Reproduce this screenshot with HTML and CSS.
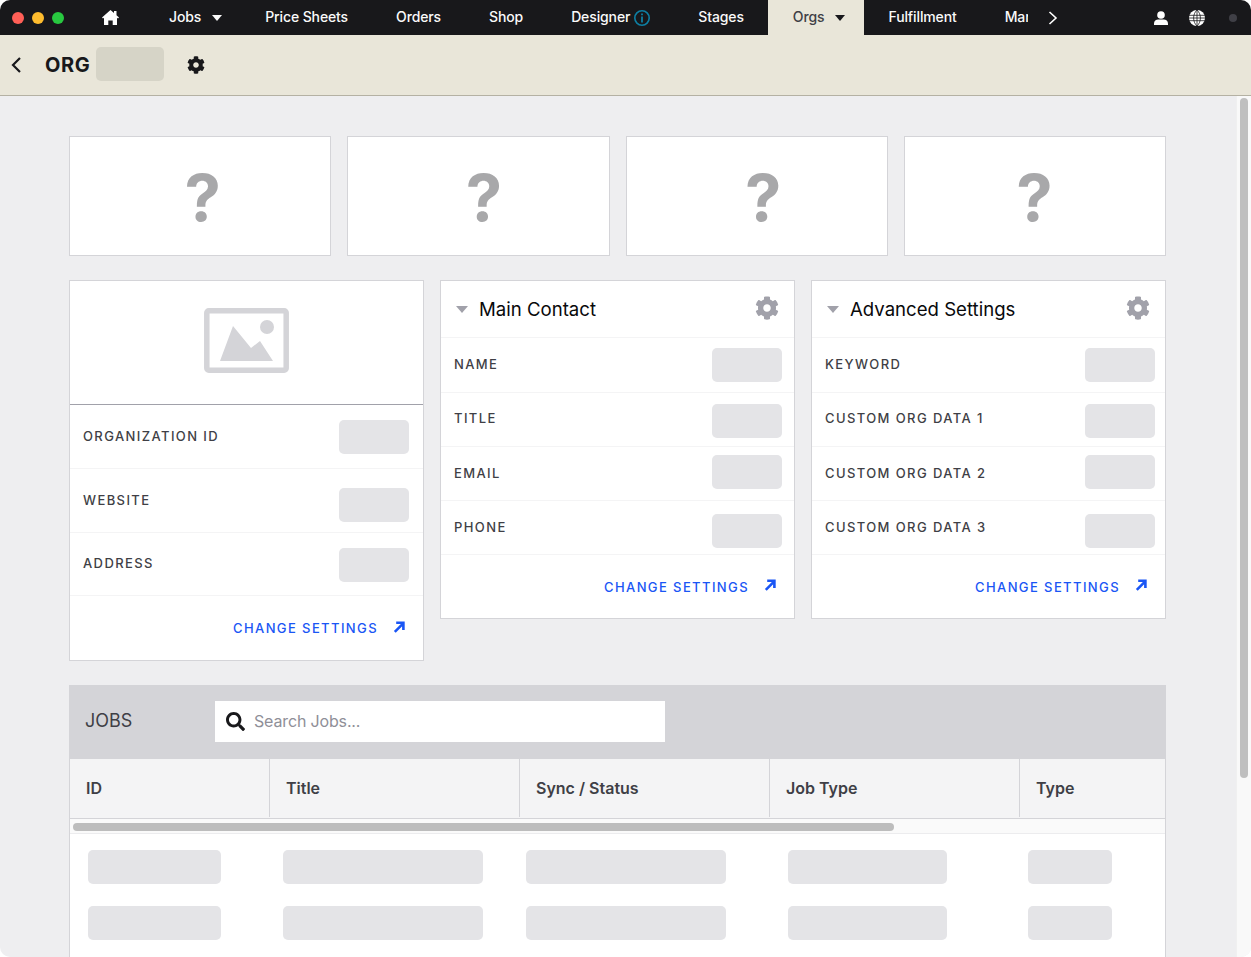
FILE: index.html
```html
<!DOCTYPE html>
<html lang="en">
<head>
    <meta charset="UTF-8">
    <meta name="viewport" content="width=device-width, initial-scale=1.0">
    <title>Org</title>
    <link rel="stylesheet" href="styles.css">
</head>
<body>
    <svg class="icon-defs" aria-hidden="true">
        <symbol id="i-gear" viewBox="0 0 512 512"><path d="M487.4 315.7l-42.6-24.6c4.3-23.2 4.3-47 0-70.2l42.6-24.6c4.9-2.8 7.1-8.6 5.5-14-11.1-35.6-30-67.8-54.7-94.6-3.8-4.1-10-5.1-14.8-2.3L380.8 110c-17.9-15.4-38.5-27.3-60.8-35.1V25.8c0-5.6-3.9-10.5-9.4-11.7-36.7-8.2-74.3-7.8-109.2 0-5.5 1.2-9.4 6.1-9.4 11.7V75c-22.2 7.9-42.8 19.8-60.8 35.1L88.7 85.5c-4.9-2.8-11-1.9-14.8 2.3-24.7 26.7-43.6 58.9-54.7 94.6-1.7 5.4.6 11.2 5.5 14L67.3 221c-4.3 23.2-4.3 47 0 70.2l-42.6 24.6c-4.9 2.8-7.1 8.6-5.5 14 11.1 35.6 30 67.8 54.7 94.6 3.8 4.1 10 5.1 14.8 2.3l42.6-24.6c17.9 15.4 38.5 27.3 60.8 35.1v49.2c0 5.6 3.9 10.5 9.4 11.7 36.7 8.2 74.3 7.8 109.2 0 5.5-1.2 9.4-6.1 9.4-11.7v-49.2c22.2-7.9 42.8-19.8 60.8-35.1l42.6 24.6c4.9 2.8 11 1.9 14.8-2.3 24.7-26.7 43.6-58.9 54.7-94.6 1.5-5.5-.7-11.3-5.6-14.1zM256 336c-44.1 0-80-35.9-80-80s35.9-80 80-80 80 35.9 80 80-35.9 80-80 80z"/></symbol>
        <symbol id="i-caret" viewBox="0 0 12 7"><path d="M0 0h12L6 7z"/></symbol>
        <symbol id="i-out" viewBox="0 0 12 12"><path d="M1.800 10.800L10 2.600M3.200 1.700h7.200v7.200" fill="none" stroke="currentColor" stroke-width="2.600"/></symbol>
    </svg>

    <div class="app">
        <header class="topbar">
            <div class="lights">
                <span class="light red"></span>
                <span class="light yellow"></span>
                <span class="light green"></span>
            </div>
            <nav class="nav">
                <a class="nav-home" href="#">
                    <svg width="17" height="15" viewBox="0 0 17 15" fill="#fff"><path d="M8.500 0l3.500 3V1h2.500v4.200L17 7.500l-1 1.100-1-.8V15h-4.300v-4.500H6.300V15H2V7.800l-1 .8-1-1.100z"/></svg>
                </a>
                <a class="nav-item has-caret" href="#">Jobs <svg class="caret" width="10" height="6"><use href="#i-caret"/></svg></a>
                <a class="nav-item" href="#">Price Sheets</a>
                <a class="nav-item" href="#">Orders</a>
                <a class="nav-item" href="#">Shop</a>
                <a class="nav-item" href="#">Designer
                    <svg class="info" width="16" height="16" viewBox="0 0 16 16"><circle cx="8" cy="8" r="7.2" fill="none" stroke="#0e7fa3" stroke-width="1.6"/><path d="M8 6.600v6M8 3.400v1.800" stroke="#0e7fa3" stroke-width="1.800"/></svg>
                </a>
                <a class="nav-item" href="#">Stages</a>
                <a class="nav-item has-caret active" href="#">Orgs <svg class="caret" width="10" height="6"><use href="#i-caret"/></svg></a>
                <a class="nav-item" href="#">Fulfillment</a>
                <a class="nav-item" href="#">Mar</a>
            </nav>
            <svg class="nav-more" width="10" height="14" viewBox="0 0 10 14"><path d="M1.500 1l6.500 6-6.500 6" fill="none" stroke="#fff" stroke-width="1.600"/></svg>
            <div class="topbar-right">
                <svg width="14" height="14" viewBox="0 0 14 14" fill="#fff"><circle cx="7" cy="4" r="3.800"/><path d="M0 14v-1.600C0 10 2 8.400 4.200 8.400h5.600C12 8.400 14 10 14 12.400V14z"/></svg>
                <svg width="16" height="16" viewBox="0 0 16 16"><circle cx="8" cy="8" r="8" fill="#fff"/><path d="M0 5.300h16M0 8h16M0 10.700h16M8 0v16M8 0C3.500 4 3.500 12 8 16M8 0c4.500 4 4.500 12 0 16" fill="none" stroke="#18181b" stroke-width=".8"/></svg>
                <span class="status-dot"></span>
            </div>
        </header>

        <div class="subbar">
            <svg class="back" width="10" height="16" viewBox="0 0 10 16"><path d="M9 1L2 8l7 7" fill="none" stroke="#18181b" stroke-width="2.200"/></svg>
            <h1 class="org-title">ORG</h1>
            <span class="skeleton org-name"></span>
            <svg class="org-gear" width="18" height="18"><use href="#i-gear"/></svg>
        </div>

        <div class="workspace">
            <main class="content">
                <section class="tiles">
                    <div class="tile q1"><span>?</span></div>
                    <div class="tile q2"><span>?</span></div>
                    <div class="tile q3"><span>?</span></div>
                    <div class="tile q4"><span>?</span></div>
                </section>

                <section class="cards">
                    <div class="card card-org">
                        <div class="card-image">
                            <svg width="85" height="65" viewBox="0 0 85 65">
                                <rect x="2.800" y="2.800" width="79.400" height="59.400" rx="2" fill="none" stroke="#d4d4d8" stroke-width="5.500"/>
                                <circle cx="63" cy="19" r="7" fill="#d4d4d8"/>
                                <path d="M16 53L29 18l18 22 9-7 13 20z" fill="#d4d4d8"/>
                            </svg>
                        </div>
                        <div class="row row-tall"><span class="row-label">ORGANIZATION ID</span><span class="skeleton field top-15"></span></div>
                        <div class="row row-tall"><span class="row-label">WEBSITE</span><span class="skeleton field top-19"></span></div>
                        <div class="row row-mid"><span class="row-label">ADDRESS</span><span class="skeleton field top-15"></span></div>
                        <div class="card-footer footer-tall">
                            <a class="change-link" href="#">CHANGE SETTINGS</a>
                            <svg class="out" width="12" height="12"><use href="#i-out"/></svg>
                        </div>
                    </div>

                    <div class="card card-contact">
                        <div class="card-head">
                            <svg class="head-caret" width="12" height="7"><use href="#i-caret"/></svg>
                            <h2>Main Contact</h2>
                            <svg class="head-gear" width="24" height="24"><use href="#i-gear"/></svg>
                        </div>
                        <div class="row row-first"><span class="row-label">NAME</span><span class="skeleton field top-10"></span></div>
                        <div class="row"><span class="row-label">TITLE</span><span class="skeleton field top-11"></span></div>
                        <div class="row row-low"><span class="row-label">EMAIL</span><span class="skeleton field top-8"></span></div>
                        <div class="row row-low"><span class="row-label">PHONE</span><span class="skeleton field top-13"></span></div>
                        <div class="card-footer">
                            <a class="change-link" href="#">CHANGE SETTINGS</a>
                            <svg class="out" width="12" height="12"><use href="#i-out"/></svg>
                        </div>
                    </div>

                    <div class="card card-advanced">
                        <div class="card-head">
                            <svg class="head-caret" width="12" height="7"><use href="#i-caret"/></svg>
                            <h2>Advanced Settings</h2>
                            <svg class="head-gear" width="24" height="24"><use href="#i-gear"/></svg>
                        </div>
                        <div class="row row-first"><span class="row-label">KEYWORD</span><span class="skeleton field top-10"></span></div>
                        <div class="row"><span class="row-label">CUSTOM ORG DATA 1</span><span class="skeleton field top-11"></span></div>
                        <div class="row row-low"><span class="row-label">CUSTOM ORG DATA 2</span><span class="skeleton field top-8"></span></div>
                        <div class="row row-low"><span class="row-label">CUSTOM ORG DATA 3</span><span class="skeleton field top-13"></span></div>
                        <div class="card-footer">
                            <a class="change-link" href="#">CHANGE SETTINGS</a>
                            <svg class="out" width="12" height="12"><use href="#i-out"/></svg>
                        </div>
                    </div>
                </section>

                <section class="jobs">
                    <div class="jobs-bar">
                        <h2>JOBS</h2>
                        <label class="search">
                            <svg width="19" height="19" viewBox="0 0 512 512" fill="#18181b"><path d="M505 442.7L405.3 343c-4.500-4.500-10.600-7-17-7H372c27.600-35.300 44-79.700 44-128C416 93.100 322.900 0 208 0S0 93.100 0 208s93.100 208 208 208c48.300 0 92.700-16.400 128-44v16.300c0 6.400 2.500 12.500 7 17l99.700 99.700c9.400 9.400 24.600 9.400 33.900 0l28.300-28.300c9.400-9.400 9.400-24.600.1-34zM208 336c-70.700 0-128-57.200-128-128 0-70.700 57.200-128 128-128 70.700 0 128 57.200 128 128 0 70.700-57.200 128-128 128z"/></svg>
                            <input type="text" placeholder="Search Jobs...">
                        </label>
                    </div>
                    <div class="table">
                        <div class="table-head">
                            <div class="th th-id">ID</div>
                            <div class="th">Title</div>
                            <div class="th">Sync / Status</div>
                            <div class="th">Job Type</div>
                            <div class="th">Type</div>
                        </div>
                        <div class="table-scroll"><div class="table-thumb"></div></div>
                        <div class="table-body">
                            <span class="skeleton w-id"></span><span class="skeleton w-wide"></span><span class="skeleton w-wide"></span><span class="skeleton w-job"></span><span class="skeleton w-type"></span>
                            <span class="skeleton w-id"></span><span class="skeleton w-wide"></span><span class="skeleton w-wide"></span><span class="skeleton w-job"></span><span class="skeleton w-type"></span>
                        </div>
                    </div>
                </section>
            </main>
            <div class="page-scroll"><div class="page-thumb"></div></div>
        </div>
    </div>
</body>
</html>
```

FILE: styles.css
```css
:root {
    --ink: #18181b;
    --label: #3f3f46;
    --sand: #e9e6d9;
    --page: #eeeef0;
    --line: #d4d4d8;
    --line-soft: #f4f4f5;
    --bone: #e4e4e7;
    --mute: #a1a1aa;
    --blue: #1a56f5;
}

* {
    box-sizing: border-box;
    margin: 0;
    padding: 0;
}

html, body {
    height: 100%;
    overflow: hidden;
}

body {
    background: #fff;
    font-family: Inter, "Noto Sans", sans-serif;
    color: var(--ink);
}

a {
    text-decoration: none;
    color: inherit;
}

.icon-defs {
    display: none;
}

.skeleton {
    display: block;
    height: 34px;
    border-radius: 5px;
    background: var(--bone);
}

.app {
    display: flex;
    flex-direction: column;
    height: 957px;
    border-radius: 10px;
    overflow: hidden;
}

/* Top bar */
.topbar {
    display: flex;
    align-items: center;
    flex: 0 0 35px;
    background: var(--ink);
}

.lights {
    display: flex;
    gap: 8px;
    padding-left: 12px;
    width: 79px;
}

.light {
    width: 12px;
    height: 12px;
    border-radius: 50%;
}

.light.red { background: #ff5f57; }
.light.yellow { background: #febc2e; }
.light.green { background: #28c840; }

.nav {
    display: flex;
    align-items: stretch;
    flex: 0 0 949px;
    height: 35px;
    overflow: hidden;
}

.nav-home {
    display: flex;
    align-items: center;
    flex: 0 0 66px;
    padding-left: 23px;
}

.nav-item {
    display: flex;
    align-items: center;
    flex: none;
    padding: 0 24px 2px;
    font-size: 14px;
    font-weight: 500;
    letter-spacing: -0.12px;
    color: #fafafa;
    white-space: nowrap;
}

.nav-item.has-caret {
    padding-right: 19px;
}

.nav-item.active {
    background: var(--sand);
    color: var(--label);
    padding-left: 25px;
}

.caret {
    margin-left: 11px;
    margin-top: 3px;
    fill: currentColor;
}

.nav-item.active .caret {
    fill: var(--ink);
}

.info {
    margin-left: 4px;
    margin-top: 2px;
}

.nav-more {
    margin-left: 20px;
}

.topbar-right {
    display: flex;
    align-items: center;
    gap: 21px;
    margin-left: auto;
    padding-right: 14px;
}

.status-dot {
    width: 8px;
    height: 8px;
    margin-left: 3px;
    border-radius: 50%;
    background: #3f3f46;
}

/* Org header */
.subbar {
    display: flex;
    align-items: center;
    flex: 0 0 61px;
    padding-left: 11px;
    padding-bottom: 1px;
    background: var(--sand);
    border-bottom: 1px solid #b4b1a3;
}

.org-title {
    margin-left: 24px;
    font-size: 20px;
    font-weight: 700;
    letter-spacing: 0.6px;
}

.org-name {
    width: 68px;
    margin-left: 6px;
    margin-bottom: 2px;
    background: #d6d4c7;
}

.org-gear {
    margin-left: 23px;
    fill: var(--ink);
}

/* Page */
.workspace {
    display: flex;
    flex: 1;
    min-height: 0;
    background: var(--page);
}

.content {
    flex: 1;
    padding: 40px 70px 0 69px;
    overflow: hidden;
}

.page-scroll {
    flex: 0 0 14px;
    padding: 2px 3px;
    background: #f9f9f9;
    border-left: 1px solid #f0f0f0;
}

.page-thumb {
    width: 8px;
    height: 680px;
    border-radius: 4px;
    background: #bfbfbf;
}

.tiles {
    display: grid;
    grid-template-columns: repeat(4, 1fr);
    gap: 16px;
}

.tile {
    display: flex;
    align-items: center;
    justify-content: center;
    height: 120px;
    background: #fff;
    border: 1px solid var(--line);
}

.tile span {
    margin-top: 3px;
    font-size: 65px;
    font-weight: 700;
    line-height: 1;
    color: #a8a8aa;
}

.q1 span { margin-left: 5px; }
.q2 span { margin-left: 11px; }
.q3 span { margin-left: 13px; }
.q4 span { margin-left: -1px; }

.cards {
    display: grid;
    grid-template-columns: repeat(3, 1fr);
    align-items: start;
    gap: 16px;
    margin-top: 24px;
}

.card {
    background: #fff;
    border: 1px solid var(--line);
}

.card-image {
    display: flex;
    justify-content: center;
    height: 124px;
    padding-top: 27px;
    border-bottom: 1px solid var(--mute);
}

.card-head {
    display: flex;
    align-items: center;
    height: 57px;
    padding: 0 15px;
    border-bottom: 1px solid var(--line-soft);
}

.head-caret {
    fill: var(--mute);
}

.card-head h2 {
    flex: 1;
    margin-left: 11px;
    font-size: 18.6px;
    font-weight: 400;
    color: #09090b;
}

.head-gear {
    margin-bottom: 3px;
    fill: var(--mute);
}

.row {
    display: flex;
    align-items: center;
    justify-content: space-between;
    height: 54px;
    padding-left: 13px;
    padding-bottom: 3px;
    border-bottom: 1px solid var(--line-soft);
}

.row-first { height: 55px; }
.row-low { padding-bottom: 1px; }
.row-tall { height: 64px; padding-bottom: 2px; }
.row-mid { height: 63px; padding-bottom: 2px; }

.card-org .row { padding-right: 14px; }
.card-contact .row { padding-right: 12px; }
.card-advanced .row { padding-right: 10px; }

.row-label {
    font-size: 13px;
    font-weight: 500;
    letter-spacing: 1.4px;
    color: var(--label);
}

.field {
    align-self: flex-start;
    width: 70px;
}

.top-8 { margin-top: 8px; }
.top-10 { margin-top: 10px; }
.top-11 { margin-top: 11px; }
.top-13 { margin-top: 13px; }
.top-15 { margin-top: 15px; }
.top-19 { margin-top: 19px; }

.card-footer {
    display: flex;
    align-items: center;
    justify-content: flex-end;
    height: 63px;
    padding-right: 18px;
}

.footer-tall {
    height: 64px;
}

.change-link {
    font-size: 13px;
    font-weight: 500;
    letter-spacing: 1.4px;
    color: var(--blue);
}

.out {
    margin-left: 15px;
    margin-bottom: 3px;
    color: var(--blue);
}

/* Jobs table */
.jobs {
    margin-top: 24px;
}

.jobs-bar {
    display: flex;
    align-items: flex-start;
    height: 74px;
    padding-top: 16px;
    background: var(--line);
}

.jobs-bar h2 {
    flex: 0 0 146px;
    padding-left: 16px;
    font-size: 18px;
    font-weight: 400;
    line-height: 40px;
    color: var(--label);
}

.search {
    display: flex;
    align-items: center;
    gap: 9px;
    width: 450px;
    height: 41px;
    padding-left: 11px;
    background: #fff;
}

.search input {
    flex: 1;
    padding-bottom: 2px;
    border: none;
    outline: none;
    font-family: inherit;
    font-size: 16px;
    letter-spacing: -0.15px;
    color: var(--ink);
}

.search input::placeholder {
    color: #8f8f98;
    opacity: 1;
}

.table {
    border: 1px solid var(--line);
    border-top: none;
    background: #fff;
}

.table-head {
    display: flex;
    height: 60px;
    padding-bottom: 1px;
    background: var(--line-soft);
    border-bottom: 1px solid var(--line);
}

.th {
    display: flex;
    align-items: center;
    flex: 0 0 250px;
    padding-left: 16px;
    padding-bottom: 1px;
    font-size: 16px;
    font-weight: 600;
    color: var(--label);
    border-right: 1px solid var(--line);
}

.th-id {
    flex-basis: 200px;
}

.th:last-child {
    flex: 1;
    border-right: none;
}

.table-scroll {
    height: 15px;
    padding: 4px 3px 0;
    background: #fafafa;
    border-bottom: 1px solid #ececee;
}

.table-thumb {
    width: 821px;
    height: 8px;
    border-radius: 4px;
    background: #bdbdbd;
}

.table-body {
    display: grid;
    grid-template-columns: 195px 243px 262px 240px 1fr;
    row-gap: 22px;
    padding: 16px 0 40px 18px;
}

.w-id { width: 133px; }
.w-wide { width: 200px; }
.w-job { width: 159px; }
.w-type { width: 84px; }
```
